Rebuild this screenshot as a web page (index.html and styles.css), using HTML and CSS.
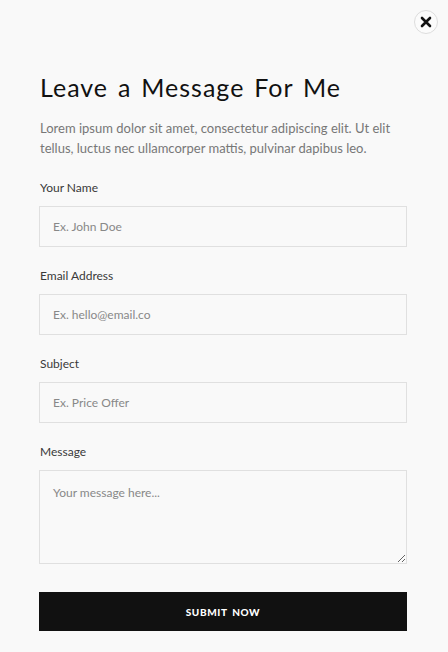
FILE: index.html
```html
<!DOCTYPE html>
<html lang="en">
<head>
    <meta charset="UTF-8">
    <meta name="viewport" content="width=device-width, initial-scale=1.0">
    <title>Leave a Message For Me</title>
    <link rel="stylesheet" href="styles.css">
</head>
<body>

    <button class="close-btn" aria-label="Close">
        <svg width="12" height="12" viewBox="0 0 12 12">
            <path d="M2 2 L10 10 M10 2 L2 10" stroke="#111" stroke-width="2.6" stroke-linecap="round"/>
        </svg>
    </button>

    <div class="container">
        <h1 class="title">Leave a Message For Me</h1>
        <p class="intro">Lorem ipsum dolor sit amet, consectetur adipiscing elit. Ut elit tellus, luctus nec ullamcorper mattis, pulvinar dapibus leo.</p>

        <div class="form-group">
            <label for="name">Your Name</label>
            <input type="text" id="name" placeholder="Ex. John Doe">
        </div>

        <div class="form-group">
            <label for="email">Email Address</label>
            <input type="email" id="email" placeholder="Ex. hello@email.co">
        </div>

        <div class="form-group">
            <label for="subject">Subject</label>
            <input type="text" id="subject" placeholder="Ex. Price Offer">
        </div>

        <div class="form-group">
            <label for="message">Message</label>
            <textarea id="message" placeholder="Your message here..."></textarea>
        </div>

        <button type="submit" class="submit-btn">Submit Now</button>
    </div>

</body>
</html>
```

FILE: styles.css
```css
body {
    font-family: 'Lato', sans-serif;
    margin: 0;
    padding: 0;
    background-color: #f9f9f9;
    color: #222;
}

.close-btn {
    position: absolute;
    top: 10px;
    right: 10px;
    width: 24px;
    height: 24px;
    border-radius: 50%;
    border: 1px solid #ddd;
    background: #fbfbfb;
    padding: 0;
    display: flex;
    align-items: center;
    justify-content: center;
    cursor: pointer;
}

.container {
    width: 368px;
    margin-left: 39px;
    padding-top: 70px;
}

.title {
    font-size: 25px;
    font-weight: 400;
    letter-spacing: 1px;
    word-spacing: 2.5px;
    color: #111;
    margin: 0 0 14px 1px;
    line-height: 34px;
}

.intro {
    font-size: 13px;
    line-height: 20px;
    color: #777;
    margin: 0 0 22px 1px;
}

.form-group {
    margin-bottom: 21px;
}

label {
    display: block;
    font-size: 12px;
    color: #3a3a3a;
    margin: 0 0 10px 1px;
    line-height: 16px;
}

input, textarea {
    display: block;
    width: 100%;
    box-sizing: border-box;
    border: 1px solid #e0e0e0;
    background: #f9f9f9;
    font-family: 'Lato', sans-serif;
    font-size: 12px;
    color: #333;
    padding: 0 13px;
    margin: 0;
}

input {
    height: 41px;
}

textarea {
    height: 94px;
    padding-top: 14px;
    resize: vertical;
}

input::placeholder, textarea::placeholder {
    color: #888;
}

.submit-btn {
    display: block;
    width: 100%;
    height: 39px;
    margin-top: 28px;
    background-color: #111;
    color: #fff;
    border: none;
    font-family: 'Lato', sans-serif;
    font-size: 10px;
    font-weight: 900;
    letter-spacing: 0.6px;
    word-spacing: 2px;
    text-transform: uppercase;
    cursor: pointer;
}
```
